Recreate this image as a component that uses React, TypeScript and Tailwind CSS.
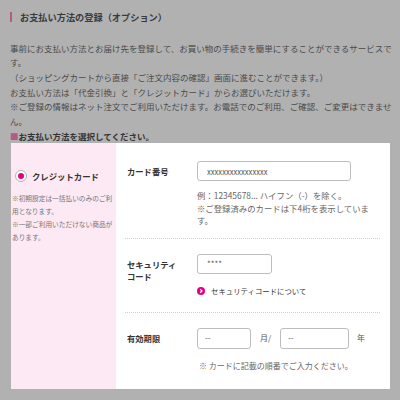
export default function App() {
  return (
    <div className="w-[400px] h-[400px] overflow-hidden bg-[#b1b1b1] font-['Noto_Sans_CJK_JP','Noto_Sans',sans-serif] text-[#4a4a4a]">
      <div className="px-[10px]">
        <div className="mt-[12px] h-[10px] border-l-2 border-[#b45a86] pl-[8px] text-[9.2px] leading-[10px] font-bold text-[#3a3a3a] whitespace-nowrap">
          お支払い方法の登録（オプション）
        </div>

        <div className="mt-[18.5px] text-[8.5px] leading-[14.7px] whitespace-nowrap">
          <div>事前にお支払い方法とお届け先を登録して、お買い物の手続きを簡単にすることができるサービスで</div>
          <div>す。</div>
          <div>（ショッピングカートから直接「ご注文内容の確認」画面に進むことができます。）</div>
          <div>お支払い方法は「代金引換」と「クレジットカード」からお選びいただけます。</div>
          <div>※ご登録の情報はネット注文でご利用いただけます。お電話でのご利用、ご確認、ご変更はできませ</div>
          <div>ん。</div>
          <div className="font-bold text-[#333]">
            <span className="text-[#b45a86]">■</span>お支払い方法を選択してください。
          </div>
        </div>

        <div className="ml-[1px] w-[379px] h-[246px] flex">
          <div className="w-[105px] bg-[#fce9f4] pt-[26px]">
            <div className="flex items-center h-[14px] pl-[4px] gap-[5px]">
              <span className="w-[12px] h-[12px] rounded-full bg-white border border-[#b5b5b5] flex items-center justify-center">
                <span className="w-[6px] h-[6px] rounded-full bg-[#e4007f]" />
              </span>
              <span className="text-[8.4px] font-bold text-[#333] whitespace-nowrap">クレジットカード</span>
            </div>
            <div className="mt-[8.5px] pl-[1px] text-[6.7px] leading-[13px] text-[#777] whitespace-nowrap">
              <div>※初期設定は一括払いのみのご利</div>
              <div>用となります。</div>
              <div>※一部ご利用いただけない商品が</div>
              <div>あります。</div>
            </div>
          </div>

          <div className="flex-1 bg-white text-[#444]">
            <div className="pl-[11px] pt-[18px] pb-[11px] flex">
              <div className="w-[70px] h-[20px] flex items-center text-[8.3px] font-bold text-[#333]">カード番号</div>
              <div>
                <div className="w-[154px] h-[20px] rounded-[3px] border border-[#bdbdbd] flex items-center pl-[9px] text-[7.6px] text-[#555]">
                  xxxxxxxxxxxxxxxx
                </div>
                <div className="mt-[7.75px] text-[8.4px] leading-[12.5px] text-[#666] whitespace-nowrap">
                  <div>例：12345678... ハイフン（-）を除く。</div>
                  <div>※ご登録済みのカードは下4桁を表示していま</div>
                  <div>す。</div>
                </div>
              </div>
            </div>

            <div className="ml-[9px] mr-[10px] border-t border-dotted border-[#cfcfcf]" />

            <div className="pl-[11px] pt-[15px] pb-[15px] flex">
              <div className="w-[70px] text-[8.3px] leading-[12px] font-bold text-[#333] pt-[4px]">
                <div>セキュリティ</div>
                <div>コード</div>
              </div>
              <div>
                <div className="w-[75px] h-[20px] rounded-[3px] border border-[#bdbdbd] flex items-center pl-[9px] text-[8px] text-[#555]">
                  ****
                </div>
                <div className="mt-[11px] h-[12px] flex items-center gap-[6px]">
                  <svg width="8" height="8" viewBox="0 0 8 8">
                    <circle cx="4" cy="4" r="4" fill="#e4007f" />
                    <path d="M3.2 2.3 L5 4 L3.2 5.7" stroke="#fff" strokeWidth="1.2" fill="none" />
                  </svg>
                  <span className="text-[7.4px] text-[#333] whitespace-nowrap">セキュリティコードについて</span>
                </div>
              </div>
            </div>

            <div className="ml-[9px] mr-[10px] border-t border-dotted border-[#cfcfcf]" />

            <div className="pl-[11px] pt-[15px] flex">
              <div className="w-[70px] h-[21px] flex items-center text-[8.3px] font-bold text-[#333]">有効期限</div>
              <div>
                <div className="flex items-center h-[21px] text-[8px] text-[#555]">
                  <div className="w-[54px] h-[21px] rounded-[3px] border border-[#bdbdbd] flex items-center pl-[7px]">--</div>
                  <span className="ml-[9px] w-[20px]">月/</span>
                  <div className="w-[69px] h-[21px] rounded-[3px] border border-[#bdbdbd] flex items-center pl-[7px]">--</div>
                  <span className="ml-[8px]">年</span>
                </div>
                <div className="mt-[11px] pl-[2px] text-[8px] leading-[12px] text-[#666] whitespace-nowrap">
                  ※ カードに記載の順番でご入力ください。
                </div>
              </div>
            </div>
          </div>
        </div>
      </div>
    </div>
  );
}
